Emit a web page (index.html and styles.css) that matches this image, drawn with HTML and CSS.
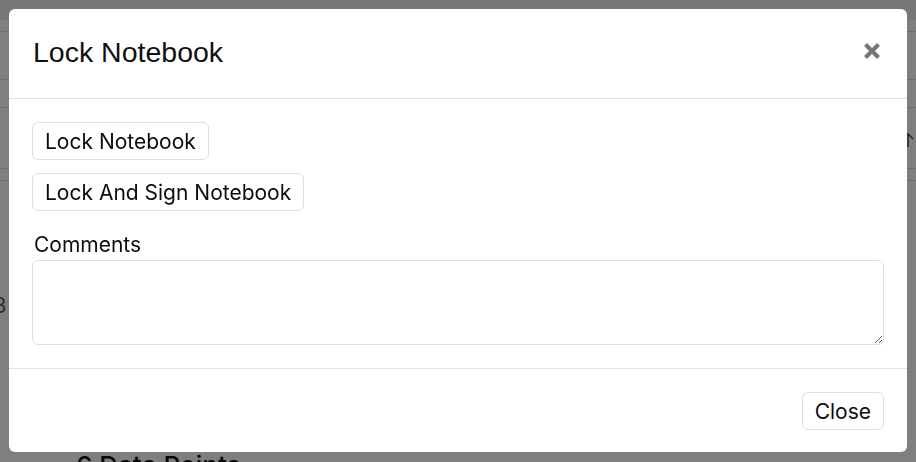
FILE: index.html
```html
<!DOCTYPE html>
<html lang="en">
<head>
<meta charset="utf-8">
<title>Lock Notebook</title>
<link rel="stylesheet" href="styles.css">
</head>
<body>
<div class="page">
  <div class="topbar"></div>
  <div class="row r1"></div>
  <div class="row r2"></div>
  <div class="row r3"></div>
  <div class="row r4">
    <svg class="up" width="12" height="16" viewBox="0 0 12 16"><path d="M6 15 V2 M1 7 L6 2 L11 7" stroke="#555" stroke-width="1.6" fill="none"/></svg>
  </div>
  <div class="row r5"></div>
  <div class="side">8</div>
  <h2 class="points">6 Data Points</h2>
</div>

<div class="backdrop">
  <div class="dialog">
    <div class="dialog-header">
      <h1 class="dialog-title">Lock Notebook</h1>
      <button class="close-x" aria-label="Close">
        <svg width="18" height="18" viewBox="0 0 18 18"><path d="M2.5 2.5 L15.5 15.5 M15.5 2.5 L2.5 15.5" stroke="#767676" stroke-width="4.2" fill="none"/></svg>
      </button>
    </div>
    <div class="dialog-body">
      <div class="actions">
        <button class="btn">Lock Notebook</button>
        <button class="btn">Lock And Sign Notebook</button>
      </div>
      <label class="label" for="comments">Comments</label>
      <textarea id="comments" class="comments"></textarea>
    </div>
    <div class="dialog-footer">
      <button class="btn">Close</button>
    </div>
  </div>
</div>
</body>
</html>
```
FILE: styles.css
```css
* { box-sizing: border-box; }
html, body { margin: 0; padding: 0; }
body {
  width: 916px;
  height: 462px;
  overflow: hidden;
  background: #fff;
  font-family: Inter, "Noto Sans", sans-serif;
  color: #111;
}
.page { position: relative; height: 462px; }
.topbar { height: 20px; background: #eeeef2; }
.row { border-bottom: 1px solid #dcdcdc; }
.r1 { height: 12px; }
.r2 { height: 48px; }
.r3 { height: 28px; }
.r4 { height: 61px; position: relative; }
.r5 { height: 12px; }
.up { position: absolute; right: 2px; top: 24px; }
.side { position: absolute; left: -7px; top: 292px; font-size: 22px; color: #666; }
.points {
  position: absolute;
  left: 76px;
  top: 451px;
  margin: 0;
  font-family: Inter, sans-serif;
  font-weight: 500;
  font-size: 26px;
  line-height: 30px;
  color: #111;
}

.backdrop {
  position: fixed;
  inset: 0;
  background: rgba(0, 0, 0, 0.5);
  display: flex;
  justify-content: center;
  padding-top: 9px;
}
.dialog {
  width: 898px;
  height: 443px;
  background: #fff;
  border-radius: 6px;
  display: flex;
  flex-direction: column;
}
.dialog-header {
  height: 90px;
  border-bottom: 1px solid #dedee3;
  display: flex;
  align-items: center;
  justify-content: space-between;
  padding: 0 24px 0 24px;
}
.dialog-title {
  margin: 0;
  font-family: "Liberation Sans", Arial, sans-serif;
  font-weight: 400;
  font-size: 28.5px;
  color: #111;
  padding-bottom: 2px;
}
.close-x {
  border: 0;
  background: none;
  padding: 0;
  width: 18px;
  height: 18px;
  margin-right: 2px;
  margin-bottom: 5px;
  display: flex;
}
.dialog-body {
  padding: 23px 23px 23px 23px;
  border-bottom: 1px solid #e4e4e8;
  display: flex;
  flex-direction: column;
}
.actions {
  display: flex;
  flex-direction: column;
  align-items: flex-start;
  gap: 13px;
}
.btn {
  height: 38px;
  padding: 0 12px;
  border: 1px solid #dedede;
  border-radius: 6px;
  background: #fff;
  font-family: Inter, sans-serif;
  font-size: 21px;
  color: #0d0d0d;
}
.label {
  margin-top: 21px;
  margin-left: 2px;
  font-size: 21px;
  line-height: 26px;
  color: #0d0d0d;
}
.comments {
  margin-top: 2px;
  height: 85px;
  width: 100%;
  border: 1px solid #dedede;
  border-radius: 6px;
  font-family: Inter, sans-serif;
  font-size: 20px;
  resize: vertical;
}
.dialog-footer {
  flex: 1;
  display: flex;
  justify-content: flex-end;
  align-items: flex-start;
  padding: 23px 23px 0 23px;
}
```
